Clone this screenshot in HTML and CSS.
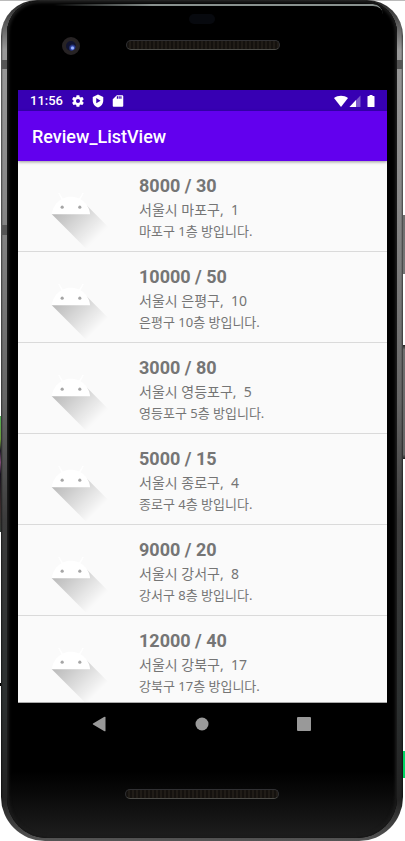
FILE: index.html
```
<!DOCTYPE html>
<html lang="ko">
<head>
<meta charset="utf-8">
<meta name="viewport" content="width=device-width, initial-scale=1">
<title>Review_ListView</title>
<link rel="stylesheet" href="styles.css">
</head>
<body>
<svg width="0" height="0" class="defs" aria-hidden="true">
  <defs>
    <linearGradient id="shade" gradientUnits="userSpaceOnUse" x1="42.9" y1="49.6" x2="85.8" y2="92.5">
      <stop offset="0" stop-color="#000" stop-opacity=".27"/>
      <stop offset="1" stop-color="#000" stop-opacity="0"/>
    </linearGradient>
    <symbol id="robot" viewBox="0 0 108 108">
      <path fill="url(#shade)" d="M31,63.928c0,0 6.4,-11 12.1,-13.1c7.2,-2.6 26,-1.4 26,-1.4l38.1,38.1L107,108.928l-32,-1L31,63.928z"/>
      <path fill="#fff" d="M65.3,45.828l3.8,-6.6c0.2,-0.4 0.1,-0.9 -0.3,-1.1c-0.4,-0.2 -0.9,-0.1 -1.1,0.3l-3.9,6.7c-6.3,-2.8 -13.4,-2.8 -19.7,0l-3.9,-6.7c-0.2,-0.4 -0.7,-0.5 -1.1,-0.3C38.8,38.328 38.7,38.828 38.9,39.228l3.8,6.6C36.2,49.428 31.7,56.028 31,63.928h46C76.3,56.028 71.8,49.428 65.3,45.828z"/>
      <g fill="#a6a6a6"><circle cx="43.4" cy="55.4" r="1.9"/><circle cx="64.6" cy="55.4" r="1.9"/></g>
    </symbol>
  </defs>
</svg>
<div class="phone">
  <div class="face">
    <div class="bezel-top">
      <span class="glint"></span>
      <span class="camera"></span>
      <span class="sensor"></span>
      <span class="speaker"></span>
    </div>
    <main class="screen">
      <div class="status">
        <span class="clock">11:56</span>
        <svg class="status-icon" viewBox="0 0 24 24" aria-hidden="true"><path d="M19.4 13c.1-.7.1-1.300 0-2l2.100-1.600c.2-.2.200-.4.100-.7l-2-3.400c-.1-.2-.4-.3-.6-.2l-2.500 1c-.5-.4-1.100-.7-1.700-1L14.400 2.500c0-.3-.2-.5-.5-.5h-4c-.2 0-.4.200-.5.400L9 5.100c-.6.200-1.200.6-1.700 1l-2.500-1c-.2-.1-.5 0-.6.200l-2 3.400c-.1.2-.1.500.1.700L4.400 11c-.1.700-.1 1.300 0 2l-2.100 1.600c-.2.200-.2.400-.1.700l2 3.400c.1.200.4.300.6.200l2.500-1c.5.400 1.100.7 1.700 1l.4 2.700c0 .2.200.4.500.4h4c.3 0 .5-.2.5-.4l.4-2.700c.6-.3 1.200-.6 1.700-1l2.500 1c.2.100.5 0 .6-.2l2-3.400c.1-.2.100-.5-.1-.7zM12 15.500a3.500 3.500 0 1 1 0-7 3.500 3.500 0 0 1 0 7z"/></svg>
        <svg class="status-icon" viewBox="0 0 24 24" aria-hidden="true"><path fill-rule="evenodd" d="M12 1 3 5v6c0 5.600 3.800 10.700 9 12 5.200-1.300 9-6.400 9-12V5zM9 7l7.500 4.500L9 16z"/></svg>
        <svg class="status-icon" viewBox="0 0 24 24" aria-hidden="true"><path fill-rule="evenodd" d="M19 2h-9L3 9v11c0 1.100.9 2 2 2h14c1.100 0 2-.9 2-2V4c0-1.100-.9-2-2-2zM10 8h2V4h-2zM13 8h2V4h-2zM16 8h2V4h-2z"/></svg>
        <span class="spacer"></span>
        <svg class="wifi" viewBox="0 0 14 12" aria-hidden="true"><path d="M0 3C4 0 10 0 14 3L7 12z"/></svg>
        <svg class="signal" viewBox="0 0 12 12" aria-hidden="true"><path opacity=".35" d="M11.500.5v11.500H.5z"/><path d="M7 5v7H.5z"/></svg>
        <svg class="battery" viewBox="0 0 8 12" aria-hidden="true"><path d="M2.500 0h3v1H7q.5 0 .5.500v10q0 .5-.5.500H1q-.5 0-.5-.5v-10Q.5 1 1 1h1.500z"/></svg>
      </div>
      <header class="appbar"><h1>Review_ListView</h1></header>
      <ul class="list">
        <li class="row"><svg class="thumb" aria-hidden="true"><use href="#robot"/></svg><div class="info"><h2>8000 / 30</h2><p class="place">서울시 마포구,&nbsp; 1</p><p class="note">마포구 1층 방입니다.</p></div></li>
        <li class="row"><svg class="thumb" aria-hidden="true"><use href="#robot"/></svg><div class="info"><h2>10000 / 50</h2><p class="place">서울시 은평구,&nbsp; 10</p><p class="note">은평구 10층 방입니다.</p></div></li>
        <li class="row"><svg class="thumb" aria-hidden="true"><use href="#robot"/></svg><div class="info"><h2>3000 / 80</h2><p class="place">서울시 영등포구,&nbsp; 5</p><p class="note">영등포구 5층 방입니다.</p></div></li>
        <li class="row"><svg class="thumb" aria-hidden="true"><use href="#robot"/></svg><div class="info"><h2>5000 / 15</h2><p class="place">서울시 종로구,&nbsp; 4</p><p class="note">종로구 4층 방입니다.</p></div></li>
        <li class="row"><svg class="thumb" aria-hidden="true"><use href="#robot"/></svg><div class="info"><h2>9000 / 20</h2><p class="place">서울시 강서구,&nbsp; 8</p><p class="note">강서구 8층 방입니다.</p></div></li>
        <li class="row"><svg class="thumb" aria-hidden="true"><use href="#robot"/></svg><div class="info"><h2>12000 / 40</h2><p class="place">서울시 강북구,&nbsp; 17</p><p class="note">강북구 17층 방입니다.</p></div></li>
      </ul>
    </main>
    <div class="bezel-bottom">
      <nav class="nav">
        <button type="button" aria-label="Back"><svg viewBox="0 0 16 16"><path d="M13.500 1v14Q13 15.500 12 15L1 8.500Q.5 8 1 7.500L12 1q1-.5 1.500 0z"/></svg></button>
        <button type="button" aria-label="Home"><svg viewBox="0 0 16 16"><circle cx="8" cy="8" r="6.500"/></svg></button>
        <button type="button" aria-label="Recent apps"><svg viewBox="0 0 16 16"><rect x="1" y="1" width="14" height="14" rx="1"/></svg></button>
      </nav>
      <span class="speaker"></span>
    </div>
  </div>
</div>
</body>
</html>
```
FILE: styles.css
```
* { box-sizing: border-box; }

body {
  margin: 0;
  height: 100vh;
  overflow: hidden;
  font-family: Roboto, "Noto Sans CJK KR", sans-serif;
  background-color: #fff;
  background-image:
    linear-gradient(#bbb, #bbb),
    linear-gradient(#4fae54, #6b9a38 20%, #1d1826 30%, #7d4a74 40%, #17131f 50%, #3b2b2b 80%, #333d38),
    linear-gradient(#000, #000),
    linear-gradient(#6e6e6e, #777),
    linear-gradient(#222, #6e6e6e 4%, #666 96%, #222),
    linear-gradient(#00d563, #00d563);
  background-repeat: no-repeat;
  background-size: 100% 1px, 2px 116px, 2px 3px, 3px 59px, 3px 114px, 2px 27px;
  background-position: 0 0, 0 416px, 0 683px, right 215px, right 345px, right 751px;
}

.defs { position: absolute; }

.phone {
  height: 100vh;
  margin: 0 2px 0 1px;
  padding: 1px 6px 3px;
  border-radius: 36px 36px 44px 44px;
  background:
    linear-gradient(#555, #555) left 60px / 6px 9px no-repeat,
    linear-gradient(#555, #555) right 60px / 6px 9px no-repeat,
    linear-gradient(#555, #555) left 225px / 6px 10px no-repeat,
    linear-gradient(90deg, #0008, transparent 2px calc(100% - 2px), #0008),
    linear-gradient(#222 0, #999 50px, #888 200px, #666 400px, #3c3c3c 520px, #2c3030 700px, #222 800px, #555 100%);
}

.face {
  display: flex;
  flex-direction: column;
  height: 100%;
  padding: 0 10px;
  border-radius: 32px 32px 40px 40px;
  background: linear-gradient(#000 770px, #080808 790px, #1e1e1e 100%);
  box-shadow: inset 0 0 3px 2px #1c1c1c, inset 0 0 0 1px #080808;
}

.bezel-top { position: relative; flex: 0 0 89px; }

.bezel-top span { position: absolute; }

.bezel-top .glint {
  top: 3px;
  left: 36px;
  right: 4px;
  height: 10px;
  border-top: 2px solid #89918f;
  border-radius: 0 26px 0 0;
  mask-image: linear-gradient(90deg, transparent, #000 30%);
}

.bezel-top .camera {
  top: 36px;
  left: 45px;
  width: 18px;
  height: 18px;
  border: 4px solid #272324;
  border-radius: 50%;
  background: radial-gradient(circle at 65% 70%, #9ab4ff 0 1px, #3548a8 2px, #10132f 4px);
}

.bezel-top .sensor {
  top: 13px;
  left: 172px;
  width: 26px;
  height: 10px;
  border-radius: 5px;
  background: #07090e;
}

.speaker {
  width: 154px;
  height: 10px;
  border: 1px solid #303033;
  border-bottom-color: #4c4c48;
  border-radius: 5px;
  background: repeating-linear-gradient(90deg, #14110e 0 2px, #201c17 2px 4px);
}

.bezel-top .speaker { top: 39px; left: 109px; }

.screen {
  display: flex;
  flex: 1;
  flex-direction: column;
  min-height: 0;
  margin: 0 0 0 1px;
  overflow: hidden;
  background: #fafafa;
}

.status {
  display: flex;
  flex: 0 0 21px;
  align-items: center;
  gap: 6px;
  padding: 0 12px;
  color: #fff;
  background: #3700b3;
}

.status svg { fill: currentColor; }

.clock {
  margin-right: 2px;
  font-size: 13px;
  font-weight: 500;
  line-height: 21px;
}

.status-icon { width: 14px; height: 14px; }
.spacer { flex: 1; }
.wifi { width: 14px; height: 12px; }
.signal { width: 12px; height: 12px; margin-left: -5px; }
.battery { width: 8px; height: 12px; }

.appbar {
  position: relative;
  flex: 0 0 50px;
  padding: 0 14px;
  color: #fff;
  background: #6200ee;
  box-shadow: 0 1px 3px #0006;
}

.appbar h1 {
  height: 50px;
  margin: 0;
  font-size: 18px;
  font-weight: 500;
  line-height: 52px;
}

.list {
  flex: 1;
  min-height: 0;
  margin: 0;
  padding: 0;
  overflow: hidden;
  border-bottom: 1px solid #aaa;
  list-style: none;
}

.row {
  display: flex;
  gap: 23px;
  height: 91px;
  padding-left: 8px;
  border-bottom: 1px solid #dadada;
}

.thumb { flex: none; width: 90px; height: 90px; }

.info { padding-top: 13px; color: #757575; }

.info h2 {
  margin: 0;
  font-size: 18px;
  font-weight: 700;
  line-height: 24px;
}

.info p { margin: 0; font-family: "Noto Sans", "Noto Sans CJK KR", sans-serif; }
.info .place { font-size: 14px; line-height: 24px; }
.info .note { font-size: 13px; line-height: 18px; }

.bezel-bottom {
  display: flex;
  flex: 0 0 135px;
  flex-direction: column;
  align-items: center;
  gap: 44px;
}

.nav {
  display: flex;
  align-self: stretch;
  justify-content: center;
  gap: 54px;
}

.nav button {
  width: 48px;
  height: 42px;
  padding: 0;
  border: 0;
  background: none;
}

.nav svg { display: block; width: 16px; height: 16px; margin: auto; fill: #999; }
```
